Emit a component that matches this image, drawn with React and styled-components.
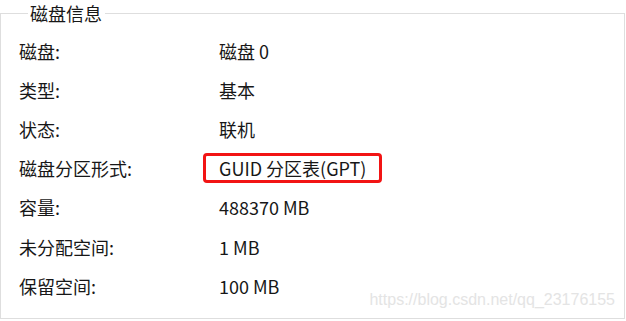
import React from 'react';
import styled, { createGlobalStyle } from 'styled-components';

const GlobalStyle = createGlobalStyle`
  html, body {
    margin: 0;
    padding: 0;
    background: #ffffff;
  }
  body {
    font-family: "Noto Sans CJK SC", "Noto Sans", sans-serif;
    color: #171717;
  }
`;

const Page = styled.div`
  width: 626px;
  height: 321px;
  position: relative;
  box-sizing: border-box;
  padding: 0 1px 2px 0;
`;

const Group = styled.fieldset`
  margin: 0;
  height: 100%;
  box-sizing: border-box;
  border: 1px solid #dedede;
  padding: 5px 0 0 18px;
`;

const Legend = styled.legend`
  margin-left: 9px;
  padding: 0 3px 0 2px;
  font-size: 18px;
  line-height: 26px;
  color: #171717;
`;

const Rows = styled.div`
  display: grid;
  grid-template-columns: 200px 1fr;
  grid-auto-rows: 39.2px;
  align-items: center;
  font-size: 18px;
`;

const Label = styled.div`
  white-space: nowrap;
`;

const Value = styled.div`
  white-space: nowrap;
  ${({ $marked }) =>
    $marked &&
    `
    justify-self: start;
    margin-left: -16px;
    padding: 0 13px 0 13px;
    line-height: 24px;
    border: 3px solid #f21414;
    border-radius: 4px;
  `}
`;

const Watermark = styled.div`
  position: absolute;
  right: 11px;
  bottom: 12px;
  font-family: "Liberation Sans", Arial, sans-serif;
  font-size: 16px;
  color: #e4e4e4;
`;

const rows = [
  ['磁盘:', '磁盘 0'],
  ['类型:', '基本'],
  ['状态:', '联机'],
  ['磁盘分区形式:', 'GUID 分区表(GPT)', true],
  ['容量:', '488370 MB'],
  ['未分配空间:', '1 MB'],
  ['保留空间:', '100 MB'],
];

const App = () => {
  return (
    <Page>
      <GlobalStyle />
      <Group>
        <Legend>磁盘信息</Legend>
        <Rows>
          {rows.map(([label, value, marked]) => (
            <React.Fragment key={label}>
              <Label>{label}</Label>
              <Value $marked={marked}>{value}</Value>
            </React.Fragment>
          ))}
        </Rows>
      </Group>
      <Watermark>https://blog.csdn.net/qq_23176155</Watermark>
    </Page>
  );
};

export default App;
